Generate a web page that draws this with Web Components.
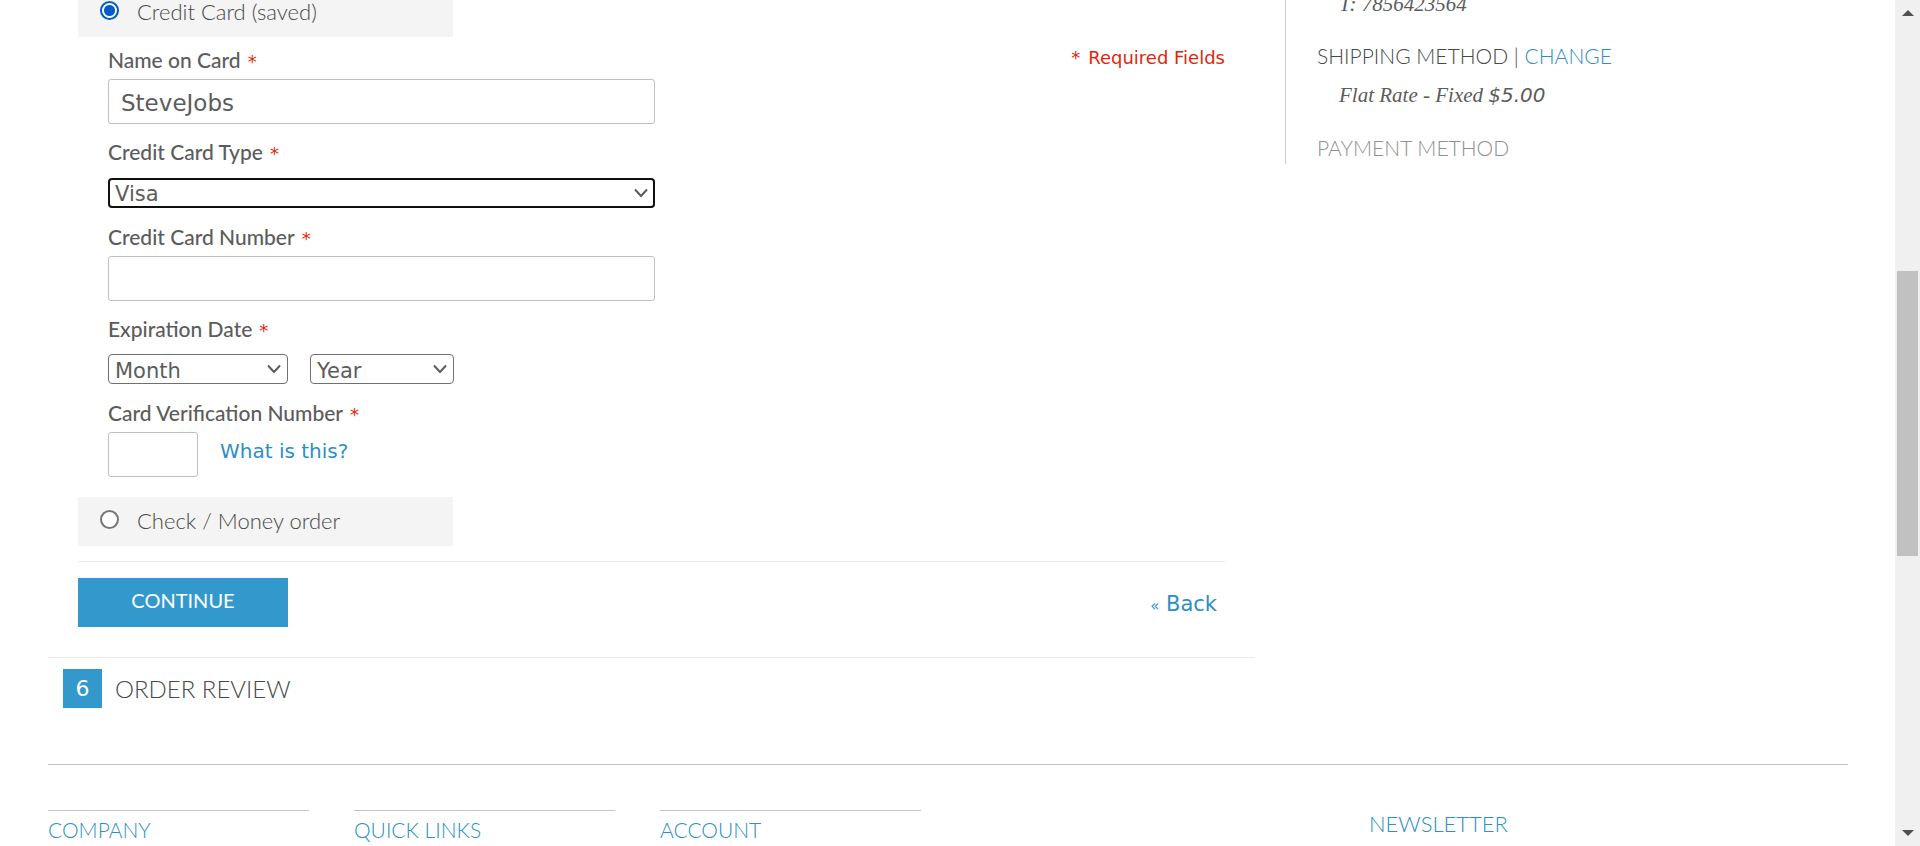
<!DOCTYPE html>
<html lang="en">
<head>
<meta charset="utf-8">
<title>Checkout</title>
<style>
  html, body { margin: 0; height: 100%; overflow: hidden; background: #fff; }
  body {
    --blue: #3399cc;
    --link: #2d8fc6;
    --text: #5c5c5c;
    --dark: #484848;
    --red: #df280a;
    --heading: Lato, "Open Sans", sans-serif;
    --body: "DejaVu Sans", Verdana, sans-serif;
    color: var(--text);
    font: 20px/24px var(--body);
  }
</style>
</head>
<body>
<checkout-page></checkout-page>

<template id="checkout-page">
  <style>
    :host { display: grid; grid-template-columns: minmax(0, 1fr) 25px; height: 100vh; overflow: hidden; }
    .view { overflow: hidden; padding: 0 47px 0 48px; }
    .columns { display: grid; grid-template-columns: minmax(0, 1207fr) minmax(0, 563fr); gap: 30px; align-items: start; }
  </style>
  <div class="view">
    <div class="columns">
      <main>
        <payment-step></payment-step>
        <step-title number="6">ORDER REVIEW</step-title>
      </main>
      <progress-summary></progress-summary>
    </div>
    <page-footer></page-footer>
  </div>
  <page-scrollbar></page-scrollbar>
</template>

<template id="payment-option">
  <style>
    :host { display: flex; box-sizing: border-box; width: 375px; height: 49px; padding: 12px 22px 0; gap: 18px; background: #f4f4f4; color: var(--dark); font: 300 22px/24px var(--heading); }
    ::slotted(input) { appearance: none; flex: none; box-sizing: border-box; width: 19px; height: 19px; margin: 1px 0 0; border: 2px solid #767676; border-radius: 50%; background: #fff; }
    ::slotted(input:checked) { border-color: #005cc8; background: radial-gradient(circle, #005cc8 5px, #fff 6px); }
  </style>
  <slot></slot>
</template>

<template id="form-field">
  <style>
    :host { display: flex; flex-direction: column; gap: 7px; }
    :host([kind="select"]) { gap: 13px; }
    .name { height: 24px; font: 500 21px/24px var(--heading); }
    .controls { display: flex; gap: 22px; }
    em { margin-left: 7px; color: var(--red); font: 18px/20px var(--body); }
  </style>
  <div class="name"><slot name="label"></slot><em>*</em></div>
  <div class="controls"><slot></slot></div>
</template>

<template id="select-box">
  <style>
    :host { display: grid; align-items: center; color: var(--text); }
    ::slotted(select) { grid-area: 1 / 1; }
    svg { grid-area: 1 / 1; justify-self: end; margin-right: 7px; pointer-events: none; z-index: 1; }
  </style>
  <slot></slot>
  <svg width="14" height="10" viewBox="0 0 14 10" fill="none" stroke="#5c5c5c" stroke-width="2"><path d="M1 1.5 7 8l6-6.500"/></svg>
</template>

<template id="payment-step">
  <style>
    :host { display: block; margin-top: -12px; padding: 0 30px 30px; border-bottom: 1px solid #ebebeb; }
    .card { display: grid; grid-template-columns: minmax(0, 547px) auto; justify-content: space-between; align-items: start; padding: 11px 0 20px 30px; }
    .fields { display: grid; gap: 16px; }
    .required { display: flex; gap: 8px; margin: -2px 0 0; color: var(--red); font-size: 18px; line-height: 24px; }
    input:not([type=radio]), select { box-sizing: border-box; font: 23px/26px var(--body); color: var(--text); background: #fff; width: 100%; margin: 0; }
    input:not([type=radio]) { height: 45px; padding: 2px 12px 0; border: 1px solid #c0c0c0; border-radius: 3px; }
    select { appearance: none; height: 30px; padding: 3px 6px 0; border: 1px solid #707070; border-radius: 4px; font-size: 21px; line-height: 24px; outline: none; }
    #type { padding: 2px 5px 0; border: 2px solid #101010; }
    #type-box { flex: 1; padding: 1px 0; }
    #month { width: 180px; }
    #year { width: 144px; }
    #cvv { width: 90px; }
    .last { margin-top: 1px; }
    a { color: var(--link); text-decoration: none; }
    .help { margin-top: 7px; font-size: 20px; }
    .buttons { display: flex; justify-content: space-between; align-items: flex-start; margin-top: 15px; padding-top: 16px; border-top: 1px solid #ebebeb; }
    button { width: 210px; height: 49px; padding: 0 0 6px; border: 0; background: var(--blue); color: #fff; font: 20px/24px var(--heading); }
    .back { margin: 14px 8px 0 0; font-size: 21px; }
    small { font-size: 15px; }
  </style>
  <payment-option><input type="radio" name="method" id="saved" checked><label for="saved">Credit Card (saved)</label></payment-option>
  <div class="card">
    <div class="fields">
      <form-field><label slot="label" for="owner">Name on Card</label><input id="owner" type="text" value="SteveJobs"></form-field>
      <form-field kind="select"><label slot="label" for="type">Credit Card Type</label><select-box id="type-box"><select id="type"><option>Visa</option></select></select-box></form-field>
      <form-field><label slot="label" for="number">Credit Card Number</label><input id="number" type="text"></form-field>
      <form-field kind="select"><label slot="label" for="month">Expiration Date</label><select-box><select id="month"><option>Month</option></select></select-box><select-box><select id="year" aria-label="Year"><option>Year</option></select></select-box></form-field>
      <form-field class="last"><label slot="label" for="cvv">Card Verification Number</label><input id="cvv" type="text"><a class="help" href="#">What is this?</a></form-field>
    </div>
    <p class="required"><span>*</span><span>Required Fields</span></p>
  </div>
  <payment-option><input type="radio" name="method" id="check"><label for="check">Check / Money order</label></payment-option>
  <div class="buttons">
    <button type="button">CONTINUE</button>
    <a class="back" href="#"><small>«</small> Back</a>
  </div>
</template>

<template id="step-title">
  <style>
    :host { display: flex; align-items: flex-start; gap: 13px; padding: 11px 15px 0; color: var(--dark); }
    span { width: 39px; height: 39px; background: var(--blue); color: #fff; font-size: 22px; line-height: 40px; text-align: center; }
    h2 { margin: 0; font: 300 24px/39px var(--heading); }
  </style>
  <span></span><h2><slot></slot></h2>
</template>

<template id="progress-summary">
  <style>
    :host { display: block; box-sizing: border-box; height: 164px; padding-left: 31px; border-left: 1px solid #ccc; }
    h3 { margin: 0; color: var(--dark); font: 300 21px/24px var(--heading); }
    p { margin: 0; padding-left: 22px; font: italic 21px/24px "Liberation Serif", serif; }
    .phone { margin-top: -8px; }
    .phone + h3 { margin-top: 28px; }
    .rate { margin: 15px 0 29px; }
    .price { font: italic 20px/24px var(--body); }
    a { color: var(--link); text-decoration: none; }
    .pending { color: #909090; }
  </style>
  <p class="phone">T: 7856423564</p>
  <h3>SHIPPING METHOD | <a href="#">CHANGE</a></h3>
  <p class="rate">Flat Rate - Fixed <span class="price">$5.00</span></p>
  <h3 class="pending">PAYMENT METHOD</h3>
</template>

<template id="page-footer">
  <style>
    :host { display: grid; grid-template-columns: minmax(0, 873fr) minmax(0, 479fr); justify-content: space-between; gap: 448px; margin-top: 56px; padding-top: 45px; border-top: 1px solid #c4c4c4; color: var(--link); }
    nav { display: grid; grid-template-columns: repeat(3, minmax(0, 1fr)); gap: 45px; }
    h4 { margin: 0; font: 300 21px/24px var(--heading); }
    nav h4 { padding-top: 7px; border-top: 1px solid #c4c4c4; }
    .news { padding-top: 2px; font-size: 22px; }
  </style>
  <nav><h4>COMPANY</h4><h4>QUICK LINKS</h4><h4>ACCOUNT</h4></nav>
  <h4 class="news">NEWSLETTER</h4>
</template>

<template id="page-scrollbar">
  <style>
    :host { display: grid; grid-template-rows: 17px 254fr 285fr 273fr 17px; justify-items: center; align-items: end; background: #f0f0f0; }
    .thumb { grid-row: 3; width: 21px; height: 100%; background: #c1c1c1; }
    .down { grid-row: 5; align-self: start; }
  </style>
  <svg width="12" height="7" viewBox="0 0 12 7" fill="#505050"><path d="M0 6 6 0l6 6z"/></svg>
  <div class="thumb"></div>
  <svg class="down" width="12" height="7" viewBox="0 0 12 7" fill="#505050"><path d="M0 1h12L6 7z"/></svg>
</template>

<script>
  class ShadowElement extends HTMLElement {
    constructor() {
      super();
      const template = document.getElementById(this.localName);
      this.attachShadow({ mode: "open" }).append(template.content.cloneNode(true));
    }
  }
  class StepTitle extends ShadowElement {
    connectedCallback() {
      this.shadowRoot.querySelector("span").textContent = this.getAttribute("number");
    }
  }
  customElements.define("step-title", StepTitle);
  for (const name of ["payment-option", "form-field", "select-box", "payment-step", "progress-summary", "page-footer", "page-scrollbar", "checkout-page"]) {
    customElements.define(name, class extends ShadowElement {});
  }
</script>
</body>
</html>
